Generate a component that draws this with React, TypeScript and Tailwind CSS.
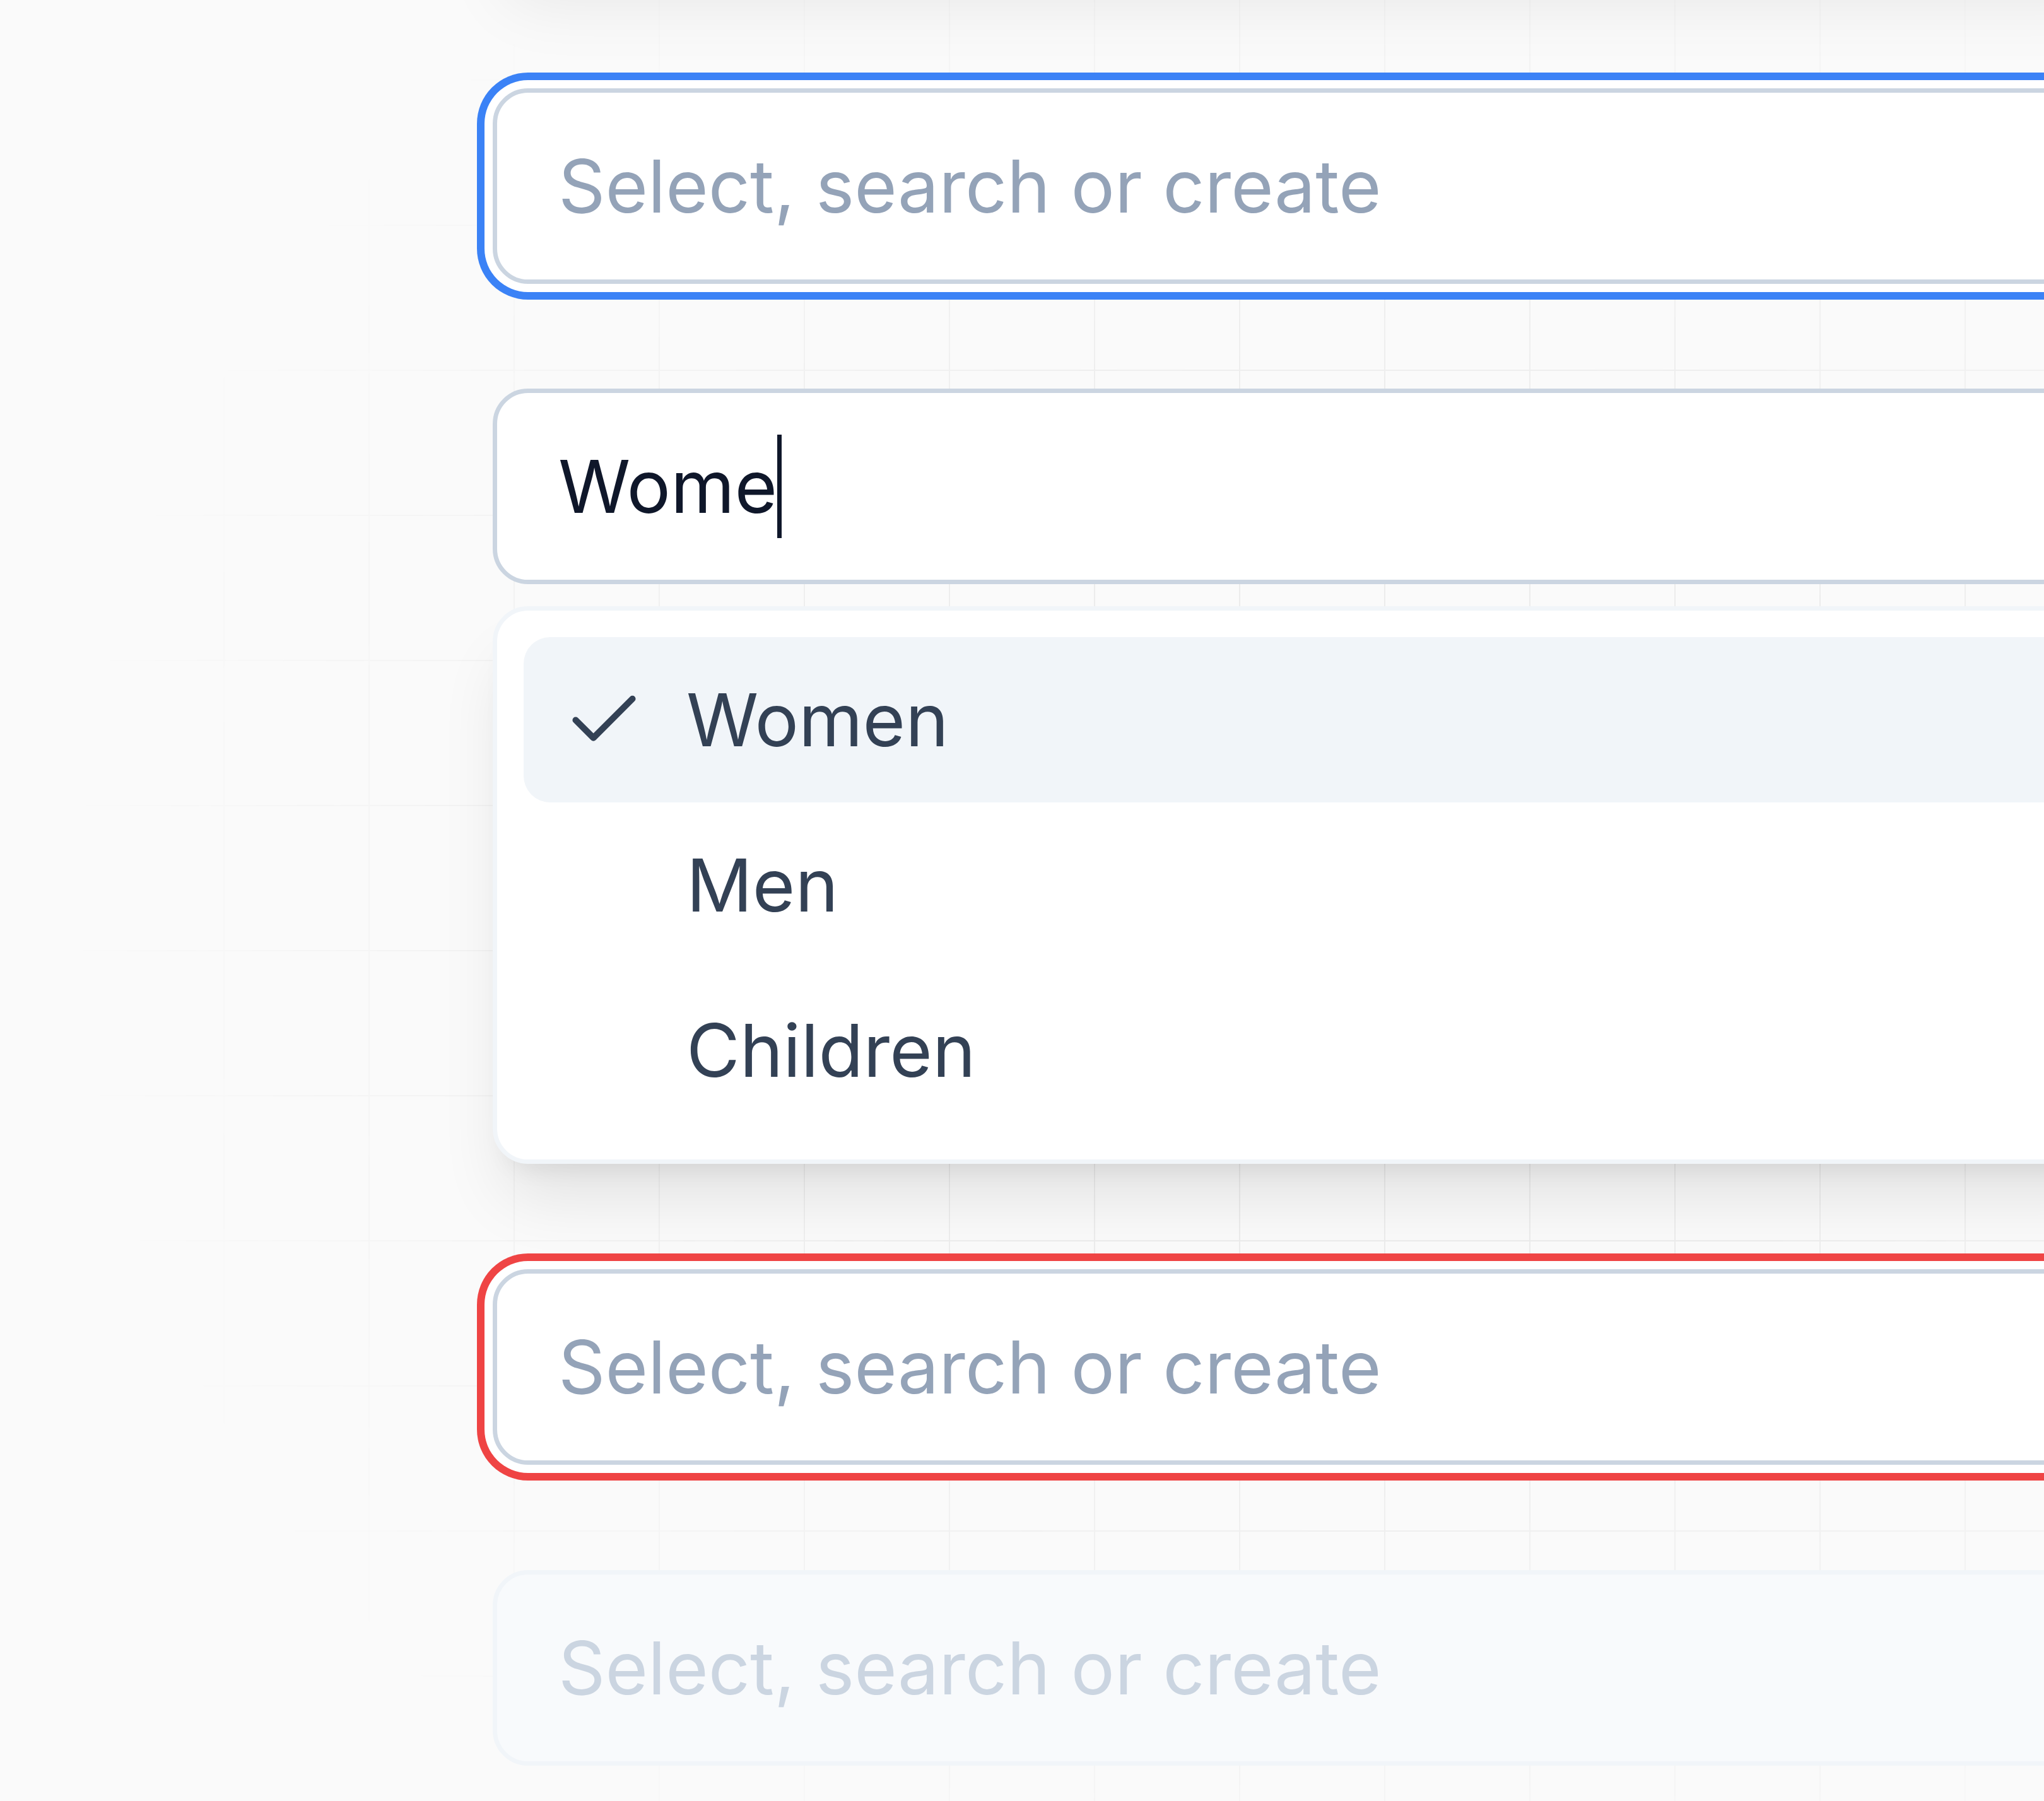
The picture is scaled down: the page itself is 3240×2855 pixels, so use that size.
import React from "react";
import { Check } from "lucide-react";

type Tone = "focus" | "idle" | "error" | "disabled";

const toneClass: Record<Tone, string> = {
  focus: "bg-white border-[#cbd5e1] ring-[12px] ring-[#3b82f6] ring-offset-[13px] ring-offset-white",
  idle: "bg-white border-[#cbd5e1]",
  error: "bg-white border-[#cbd5e1] ring-[12px] ring-[#ef4444] ring-offset-[13px] ring-offset-white",
  disabled: "bg-[#f8fafc] border-[#f1f5f9]",
};

const options = [
  { label: "Women", selected: true },
  { label: "Men", selected: false },
  { label: "Children", selected: false },
];

function Field({ tone, value, className = "" }: { tone: Tone; value?: string; className?: string }) {
  const placeholderColor = tone === "disabled" ? "text-[#cbd5e1]" : "text-[#94a3b8]";
  return (
    <div
      className={`flex h-[310px] shrink-0 items-center rounded-[56px] border-[7px] px-[97px] ${toneClass[tone]} ${className}`}
    >
      {value ? (
        <div className="flex items-center text-[116px] leading-none text-[#0f172a]">
          <span>{value}</span>
          <span className="h-[164px] w-[7px] bg-[#0f172a]" />
        </div>
      ) : (
        <span className={`text-[116px] leading-none whitespace-nowrap ${placeholderColor}`}>
          Select, search or create
        </span>
      )}
    </div>
  );
}

export default function App() {
  return (
    <main className="relative h-[2855px] w-full overflow-hidden bg-[#fafafa] font-['Inter','Noto_Sans',sans-serif]">
      {/* faint background grid */}
      <div
        aria-hidden
        className="pointer-events-none absolute inset-0 bg-[linear-gradient(to_right,#ececec_2px,transparent_2px),linear-gradient(to_bottom,#ececec_2px,transparent_2px)] bg-[size:230px_230px] bg-[position:124px_126px] [mask-image:radial-gradient(ellipse_65%_65%_at_68%_50%,black_40%,transparent_100%)]"
      />

      <div className="relative ml-[781px] flex w-[2600px] flex-col">
        {/* panel above the viewport, only its shadow shows */}
        <div className="-mt-[345px] h-[300px] shrink-0 rounded-[56px] bg-white shadow-[0_70px_105px_-21px_rgba(0,0,0,0.08),0_28px_42px_-28px_rgba(0,0,0,0.08)]" />

        <Field tone="focus" className="mt-[185px]" />

        <Field tone="idle" value="Wome" className="mt-[166px]" />

        {/* options list */}
        <div className="mt-[35px] shrink-0 rounded-[56px] border-[7px] border-[#f1f5f9] bg-white p-[42px] shadow-[0_70px_105px_-21px_rgba(0,0,0,0.1),0_28px_42px_-28px_rgba(0,0,0,0.1)]">
          {options.map((o) => (
            <div
              key={o.label}
              className={`flex h-[262px] items-center gap-[63px] rounded-[42px] pl-[60px] text-[#334155] ${o.selected ? "bg-[#f1f5f9]" : ""}`}
            >
              <span className="flex w-[135px] shrink-0 items-center justify-center">
                {o.selected && <Check size={135} strokeWidth={1.8} />}
              </span>
              <span className="text-[116px] leading-none">{o.label}</span>
            </div>
          ))}
        </div>

        <Field tone="error" className="mt-[167px]" />

        <Field tone="disabled" className="mt-[167px]" />
      </div>
    </main>
  );
}
